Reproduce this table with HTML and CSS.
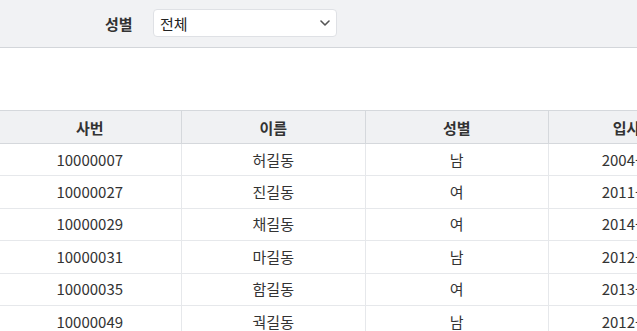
FILE: index.html
```html
<!DOCTYPE html>
<html lang="ko">
<head>
<meta charset="utf-8">
<link rel="stylesheet" href="styles.css">
</head>
<body>
<div class="filter-bar">
  <label class="filter-label">성별</label>
  <div class="select">
    <span class="select-text">전체</span>
    <svg class="chevron" width="10" height="6" viewBox="0 0 10 6"><path d="M1 1 L5 5 L9 1" fill="none" stroke="#555" stroke-width="1.6" stroke-linecap="round" stroke-linejoin="round"/></svg>
  </div>
</div>
<div class="spacer"></div>
<div class="table-wrap">
<table class="grid">
  <colgroup><col class="c1"><col class="c2"><col class="c3"><col class="c4"></colgroup>
  <thead>
    <tr><th>사번</th><th>이름</th><th>성별</th><th>입사일자</th></tr>
  </thead>
  <tbody>
    <tr><td>10000007</td><td>허길동</td><td>남</td><td>2004-03-02</td></tr>
    <tr><td>10000027</td><td>진길동</td><td>여</td><td>2011-06-13</td></tr>
    <tr><td>10000029</td><td>채길동</td><td>여</td><td>2014-09-01</td></tr>
    <tr><td>10000031</td><td>마길동</td><td>남</td><td>2012-02-20</td></tr>
    <tr><td>10000035</td><td>함길동</td><td>여</td><td>2013-11-04</td></tr>
    <tr><td>10000049</td><td>궉길동</td><td>남</td><td>2012-07-16</td></tr>
  </tbody>
</table>
</div>
</body>
</html>
```
FILE: styles.css
```css
html, body {
  margin: 0;
  padding: 0;
  background: #ffffff;
  overflow: hidden;
  font-family: "Noto Sans CJK KR", "Noto Sans", sans-serif;
  color: #333;
}
.filter-bar {
  height: 47px;
  background: #f1f2f4;
  border-bottom: 1px solid #d3d6da;
  display: flex;
  align-items: center;
  padding-left: 105px;
  gap: 18px;
}
.filter-label {
  width: 30px;
  font-size: 15px;
  font-weight: 700;
  color: #333;
}
.select {
  width: 184px;
  height: 28px;
  box-sizing: border-box;
  background: #fff;
  border: 1px solid #dfe1e5;
  border-radius: 4px;
  display: flex;
  align-items: center;
  justify-content: space-between;
  padding: 0 6px 0 6px;
  margin-top: -1px;
}
.select-text {
  font-size: 15px;
  color: #222;
}
.chevron { display: block; }
.spacer { height: 62px; }
.table-wrap {
  margin-left: -2.5px;
  width: 800px;
}
.grid {
  border-collapse: collapse;
  table-layout: fixed;
  width: 734px;
  font-size: 15px;
}
.c1, .c2, .c3, .c4 { width: 183.5px; }
.grid th {
  background: #f0f1f3;
  border: 1px solid #d5d8dc;
  height: 33px;
  padding: 0;
  font-weight: 700;
  color: #333;
  text-align: center;
  box-sizing: border-box;
  white-space: nowrap;
}
.grid td {
  border: 1px solid #e6e8eb;
  border-top: none;
  height: 31.4px;
  padding: 0;
  text-align: center;
  color: #333;
  line-height: 20px;
  white-space: nowrap;
}
```
